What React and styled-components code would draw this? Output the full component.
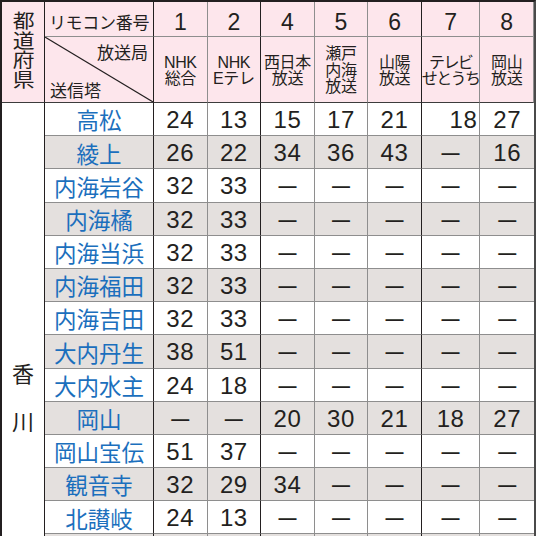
import React from 'react'
import styled, { createGlobalStyle } from 'styled-components'

const GlobalStyle = createGlobalStyle`
    body {
        margin: 0;
        background: #ffffff;
    }
`

const INK = '#231f20'
const GRID = '#8e8e8e'
const PINK = '#fde6ec'
const SHADE = '#e4e0de'
const BLUE = '#1b6fbd'

const JP = `"Noto Sans CJK JP", "Noto Sans", sans-serif`
const LATIN = `"Liberation Sans", "Noto Sans CJK JP", sans-serif`

const StyledTable = styled.div`
    display: grid;
    grid-template-columns: 43px 109px repeat(7, 1fr);
    grid-template-rows: 35px 66px repeat(14, 33.2px);

    width: 536px;
    height: 536px;
    overflow: hidden;
    box-sizing: border-box;

    border-top: 2px solid ${INK};
    border-left: 2px solid ${INK};
    border-right: 2px solid #4a4a4a;
`

const StyledHeadCell = styled.div`
    display: flex;
    align-items: center;
    justify-content: center;
    box-sizing: border-box;

    background: ${PINK};
    border-right: 1px solid ${(p) => (p.$dark ? INK : GRID)};
    border-bottom: 1px solid ${(p) => (p.$bottomDark ? '#3c3c3c' : GRID)};

    color: ${INK};
    white-space: nowrap;
`

const StyledPrefHead = styled(StyledHeadCell)`
    grid-row: span 2;
    padding-bottom: 4px;
`

const StyledVertical = styled.span`
    writing-mode: vertical-rl;
    text-orientation: upright;
    font: 19.5px/22px ${JP};
    transform: scaleX(1.12);
`

const StyledRemoconHead = styled(StyledHeadCell)`
    font: 17px/1 ${JP};
    padding-top: 5px;
    letter-spacing: -0.3px;
`

const StyledChannelNo = styled(StyledHeadCell)`
    font: 23px/1 ${LATIN};
    padding-top: 6px;
`

const StyledDiagonalHead = styled(StyledHeadCell)`
    position: relative;
    flex-direction: column;
    align-items: stretch;
    justify-content: space-between;

    font: 17px/1 ${JP};
    padding: 6px 5px 4px 5px;
`

const StyledDiagonal = styled.svg`
    position: absolute;
    left: 0;
    top: 0;
    width: 100%;
    height: 100%;
`

const StyledCorner = styled.span`
    align-self: ${(p) => (p.$end ? 'flex-end' : 'flex-start')};
`

const StyledStationHead = styled(StyledHeadCell)`
    flex-direction: column;
    text-align: center;

    font: 16px/16.5px ${LATIN};
    letter-spacing: ${(p) => (p.$tight ? '-1.6px' : '-0.4px')};
    padding-top: 3px;
`

const StyledPrefCell = styled.div`
    grid-row: 3 / span 14;
    display: flex;
    flex-direction: column;
    align-items: center;
    box-sizing: border-box;

    border-right: 1px solid ${INK};
    padding-top: 245px;

    font: 22px/48px ${JP};
    color: ${INK};
`

const StyledNameCell = styled.div`
    display: flex;
    align-items: center;
    justify-content: center;
    box-sizing: border-box;

    background: ${(p) => (p.$shade ? SHADE : '#ffffff')};
    border-right: 1px solid ${INK};
    border-bottom: 1px solid ${GRID};

    font: 22.5px/1 ${JP};
    color: ${BLUE};
    padding-top: 1px;
`

const StyledNumCell = styled.div`
    display: flex;
    align-items: center;
    justify-content: ${(p) => (p.$right ? 'flex-end' : 'center')};
    box-sizing: border-box;

    background: ${(p) => (p.$shade ? SHADE : '#ffffff')};
    border-right: ${(p) => (p.$last ? 'none' : `1px solid ${p.$dark ? INK : GRID}`)};
    border-bottom: 1px solid ${GRID};

    font: 24px/1 ${LATIN};
    letter-spacing: 0.6px;
    color: ${INK};
    padding: 2px ${(p) => (p.$right ? '2px' : '0')} 0 0;
`

const StyledDash = styled.span`
    font: bold 18px/1 ${LATIN};
    letter-spacing: 0;
`

const channels = ['1', '2', '4', '5', '6', '7', '8']
const darkAfter = [false, true, false, false, true, false, false]

const broadcasters = [
    ['NHK', '総合'],
    ['NHK', 'Eテレ'],
    ['西日本', '放送'],
    ['瀬戸', '内海', '放送'],
    ['山陽', '放送'],
    ['テレビ', 'せとうち'],
    ['岡山', '放送'],
]

const D = '—'
const rest = [D, D, D, D, D]

const stations = [
    ['高松', ['24', '13', '15', '17', '21', '18', '27']],
    ['綾上', ['26', '22', '34', '36', '43', D, '16']],
    ['内海岩谷', ['32', '33', ...rest]],
    ['内海橘', ['32', '33', ...rest]],
    ['内海当浜', ['32', '33', ...rest]],
    ['内海福田', ['32', '33', ...rest]],
    ['内海吉田', ['32', '33', ...rest]],
    ['大内丹生', ['38', '51', ...rest]],
    ['大内水主', ['24', '18', ...rest]],
    ['岡山', [D, D, '20', '30', '21', '18', '27']],
    ['岡山宝伝', ['51', '37', ...rest]],
    ['観音寺', ['32', '29', '34', D, D, D, D]],
    ['北讃岐', ['24', '13', ...rest]],
    ['', ['', '', '', '', '', '', '']],
]

const App = () => {
    return (
        <>
            <GlobalStyle />
            <StyledTable>
                <StyledPrefHead $dark $bottomDark>
                    <StyledVertical>都道府県</StyledVertical>
                </StyledPrefHead>
                <StyledRemoconHead $dark>リモコン番号</StyledRemoconHead>
                {channels.map((ch, i) => (
                    <StyledChannelNo key={ch} $dark={darkAfter[i]}>
                        {ch}
                    </StyledChannelNo>
                ))}

                <StyledDiagonalHead $dark $bottomDark>
                    <StyledDiagonal viewBox="0 0 100 100" preserveAspectRatio="none">
                        <line
                            x1="0"
                            y1="0"
                            x2="100"
                            y2="100"
                            stroke={INK}
                            strokeWidth="1.1"
                            vectorEffect="non-scaling-stroke"
                        />
                    </StyledDiagonal>
                    <StyledCorner $end>放送局</StyledCorner>
                    <StyledCorner>送信塔</StyledCorner>
                </StyledDiagonalHead>
                {broadcasters.map((lines, i) => (
                    <StyledStationHead
                        key={i}
                        $dark={darkAfter[i]}
                        $tight={lines.includes('せとうち')}
                        $bottomDark
                    >
                        {lines.map((l) => (
                            <span key={l}>{l}</span>
                        ))}
                    </StyledStationHead>
                ))}

                <StyledPrefCell>
                    <span>香</span>
                    <span>川</span>
                </StyledPrefCell>

                {stations.map(([name, values], r) => {
                    const shade = r % 2 === 1
                    return (
                        <React.Fragment key={r}>
                            <StyledNameCell $shade={shade}>{name}</StyledNameCell>
                            {values.map((v, c) => (
                                <StyledNumCell
                                    key={c}
                                    $shade={shade}
                                    $dark={darkAfter[c]}
                                    $last={c === values.length - 1}
                                    $right={r === 0 && c === 5}
                                >
                                    {v === D ? <StyledDash>{D}</StyledDash> : v}
                                </StyledNumCell>
                            ))}
                        </React.Fragment>
                    )
                })}
            </StyledTable>
        </>
    )
}

export default App
